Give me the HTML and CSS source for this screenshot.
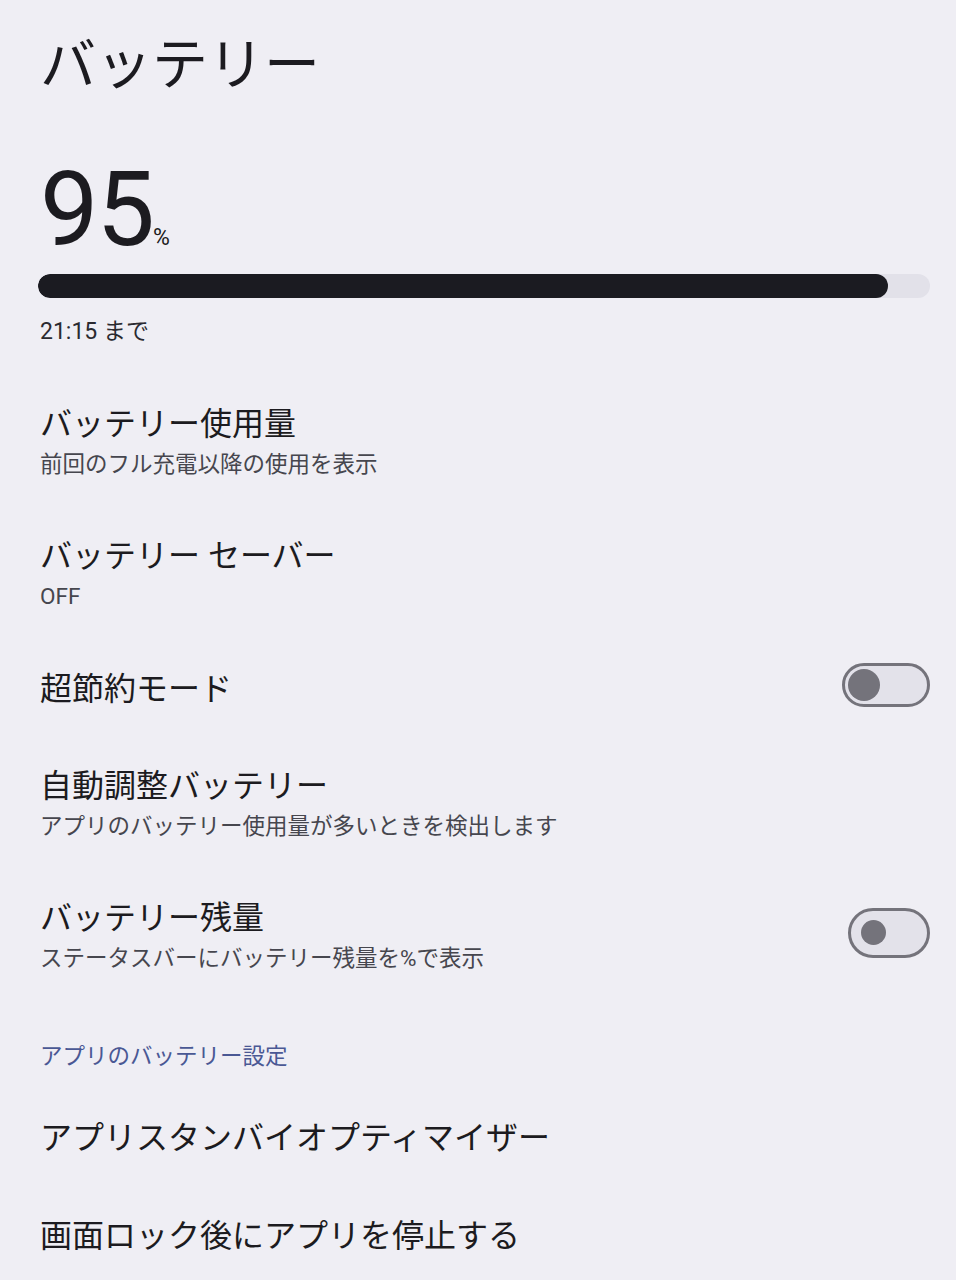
FILE: index.html
```html
<!DOCTYPE html>
<html lang="ja">
<head>
<meta charset="utf-8">
<title>バッテリー</title>
<link rel="stylesheet" href="styles.css">
</head>
<body>
<main class="page">
  <h1 class="page-title">バッテリー</h1>

  <section class="level">
    <div class="level-value"><span class="level-num">95</span><span class="level-pct">%</span></div>
    <div class="level-bar"><div class="level-fill" style="width:95.3%"></div></div>
    <div class="level-until">21:15 まで</div>
  </section>

  <ul class="list">
    <li class="item">
      <div class="item-text">
        <div class="item-title">バッテリー使用量</div>
        <div class="item-sub">前回のフル充電以降の使用を表示</div>
      </div>
    </li>
    <li class="item">
      <div class="item-text">
        <div class="item-title">バッテリー セーバー</div>
        <div class="item-sub">OFF</div>
      </div>
    </li>
    <li class="item">
      <div class="item-text">
        <div class="item-title">超節約モード</div>
      </div>
      <div class="switch switch-wide"><span class="thumb"></span></div>
    </li>
    <li class="item">
      <div class="item-text">
        <div class="item-title">自動調整バッテリー</div>
        <div class="item-sub">アプリのバッテリー使用量が多いときを検出します</div>
      </div>
    </li>
    <li class="item">
      <div class="item-text">
        <div class="item-title">バッテリー残量</div>
        <div class="item-sub">ステータスバーにバッテリー残量を%で表示</div>
      </div>
      <div class="switch switch-tall"><span class="thumb"></span></div>
    </li>
  </ul>

  <h2 class="section-header">アプリのバッテリー設定</h2>

  <ul class="list">
    <li class="item">
      <div class="item-text">
        <div class="item-title">アプリスタンバイオプティマイザー</div>
      </div>
    </li>
    <li class="item">
      <div class="item-text">
        <div class="item-title">画面ロック後にアプリを停止する</div>
      </div>
    </li>
  </ul>
</main>
</body>
</html>
```

FILE: styles.css
```css
html, body {
  margin: 0;
  padding: 0;
  background: #efeef4;
}

body {
  font-family: Roboto, "Noto Sans CJK JP", sans-serif;
  color: #1c1b20;
  width: 956px;
  height: 1280px;
  overflow: hidden;
}

.page {
  padding: 30px 26px 0 40px;
}

.page-title {
  margin: 0;
  font-size: 56px;
  font-weight: 400;
  line-height: 70px;
}

.level {
  margin-top: 50px;
}

.level-value {
  display: flex;
  align-items: baseline;
  line-height: 120px;
}

.level-num {
  font-size: 104px;
  font-weight: 400;
  letter-spacing: -2px;
}

.level-pct {
  font-size: 23px;
  margin-left: 0;
  line-height: 1;
}

.level-bar {
  margin-top: 4px;
  margin-left: -2px;
  height: 24px;
  border-radius: 12px;
  background: #e2e1e9;
  overflow: hidden;
}

.level-fill {
  height: 100%;
  border-radius: 12px;
  background: #1b1b21;
}

.level-until {
  margin-top: 19px;
  font-size: 23px;
  line-height: 30px;
  color: #2a2a30;
}

.list {
  list-style: none;
  margin: 29px 0 0;
  padding: 0;
}

.item {
  box-sizing: border-box;
  min-height: 98px;
  display: flex;
  align-items: center;
  justify-content: space-between;
  padding: 28px 0;
}

.item-title {
  font-size: 32px;
  line-height: 40px;
}

.item-sub {
  margin-top: 4px;
  font-size: 22.5px;
  line-height: 32px;
  color: #46464e;
}

.section-header {
  margin: 38px 0 0;
  font-size: 22.5px;
  font-weight: 400;
  line-height: 32px;
  color: #4a5894;
}

.section-header + .list {
  margin-top: 17px;
}

.switch {
  box-sizing: border-box;
  display: flex;
  align-items: center;
  border: 3px solid #74737b;
  border-radius: 999px;
  background: #e3e2ea;
  flex-shrink: 0;
}

.thumb {
  display: block;
  border-radius: 50%;
  background: #74737b;
}

.switch-wide {
  width: 88px;
  height: 44px;
  padding-left: 3px;
  margin-top: -8px;
}

.switch-wide .thumb {
  width: 32px;
  height: 32px;
}

.switch-tall {
  width: 82px;
  height: 50px;
  padding-left: 9.5px;
  margin-top: -7px;
}

.switch-tall .thumb {
  width: 25px;
  height: 25px;
}
```
